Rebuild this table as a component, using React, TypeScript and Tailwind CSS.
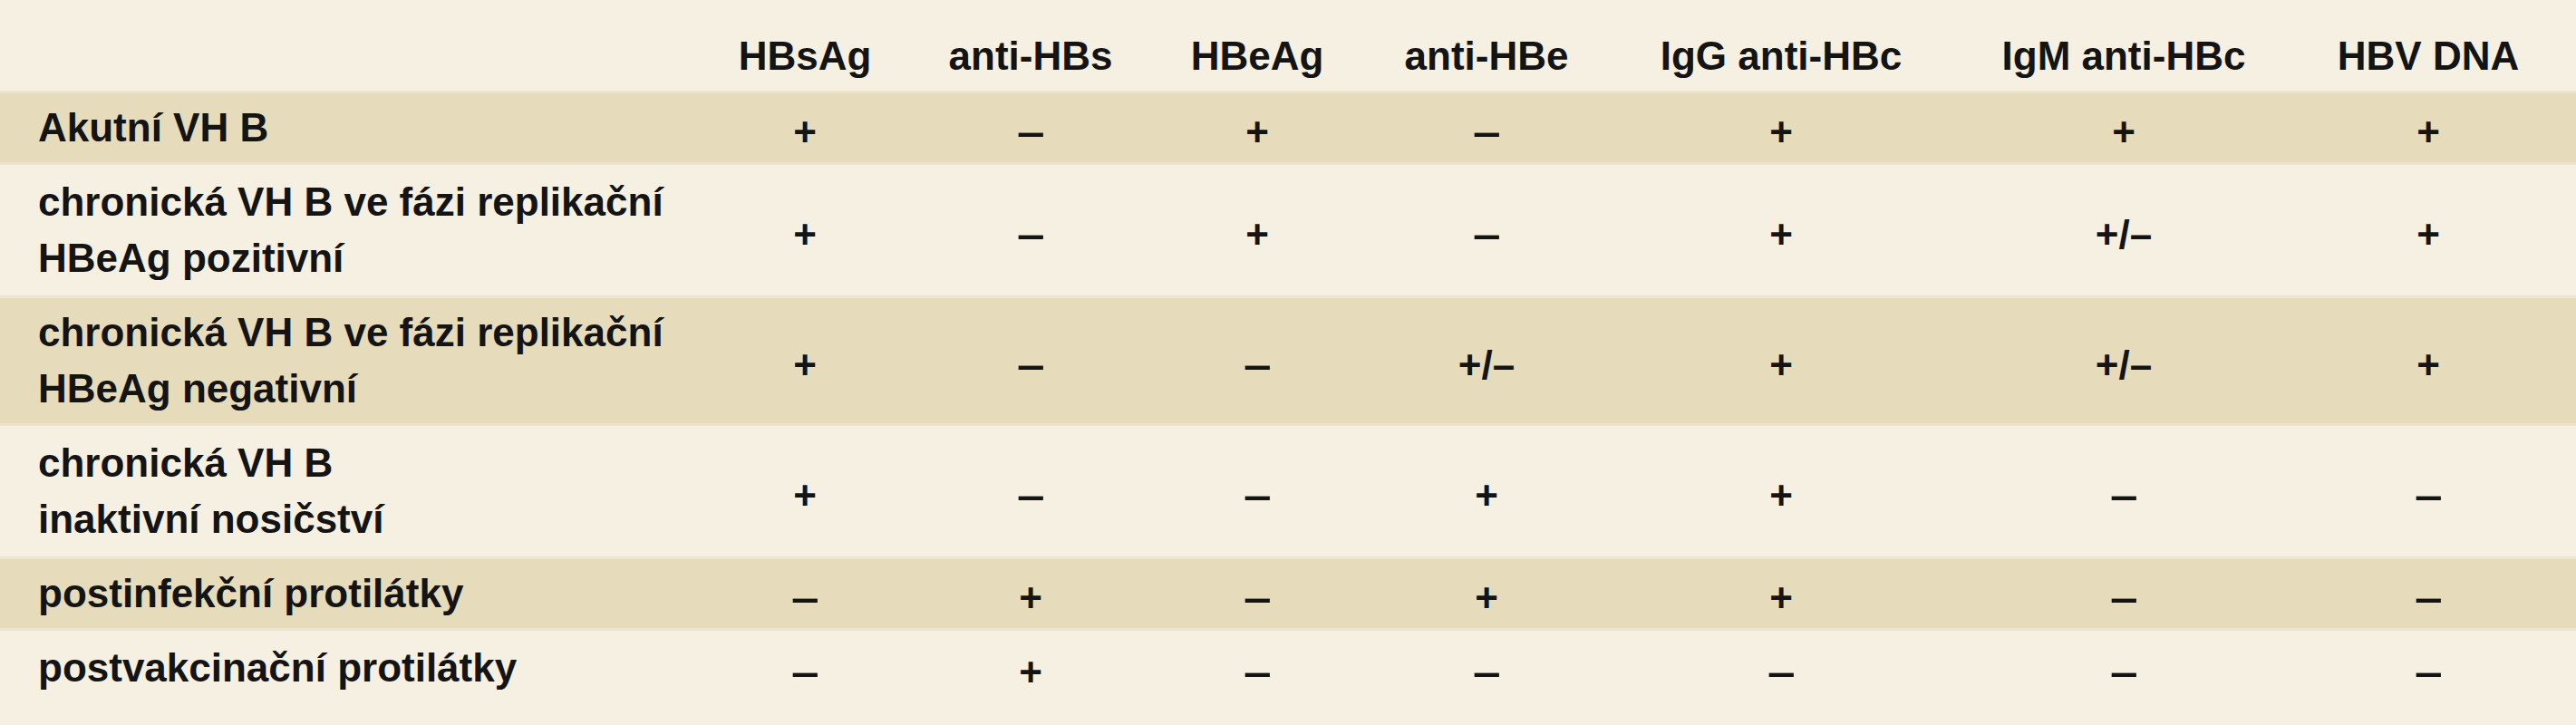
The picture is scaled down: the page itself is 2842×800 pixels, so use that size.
import React from 'react'

type Row = {
  label: string[]
  values: string[]
  shaded?: boolean
}

const columns = ['HBsAg', 'anti-HBs', 'HBeAg', 'anti-HBe', 'IgG anti-HBc', 'IgM anti-HBc', 'HBV DNA']

const rows: Row[] = [
  { label: ['Akutní VH B'], values: ['+', '–', '+', '–', '+', '+', '+'], shaded: true },
  { label: ['chronická VH B ve fázi replikační', 'HBeAg pozitivní'], values: ['+', '–', '+', '–', '+', '+/–', '+'] },
  { label: ['chronická VH B ve fázi replikační', 'HBeAg negativní'], values: ['+', '–', '–', '+/–', '+', '+/–', '+'], shaded: true },
  { label: ['chronická VH B', 'inaktivní nosičství'], values: ['+', '–', '–', '+', '+', '–', '–'] },
  { label: ['postinfekční protilátky'], values: ['–', '+', '–', '+', '+', '–', '–'], shaded: true },
  { label: ['postvakcinační protilátky'], values: ['–', '+', '–', '–', '–', '–', '–'] },
]

// fixed column template so the header and every row line up
const grid = 'grid grid-cols-[764px_248px_250px_250px_256px_394px_362px_310px_1fr]'

function Value({ v }: { v: string }) {
  // the dash in the source is a bit wider than an en dash
  if (v === '–') return <span className="inline-block scale-x-125">–</span>
  return <span>{v}</span>
}

export default function App() {
  return (
    <div className="w-[2842px] h-[800px] bg-[#f5f0e2] text-[#141414] font-['Liberation_Sans',Arial,sans-serif] font-bold text-[44px] leading-[62px] overflow-hidden">
      {/* Header */}
      <div className={`${grid} h-[100px] items-end pb-[7px]`}>
        <div />
        {columns.map((c) => (
          <div key={c} className="text-center whitespace-nowrap">{c}</div>
        ))}
        <div />
      </div>

      {/* Body rows */}
      {rows.map((r, i) => (
        <div
          key={i}
          className={`${grid} ${r.shaded ? 'bg-[#e6dcbb] shadow-[inset_0_3px_0_#ece5cd,inset_0_-3px_0_#ece5cd]' : ''}`}
        >
          <div className="pl-[42px] py-[10px]">
            {r.label.map((l, j) => (
              <div key={j} className="whitespace-nowrap">{l}</div>
            ))}
          </div>
          {r.values.map((v, j) => (
            <div key={j} className="flex items-center justify-center pt-[10px]">
              <Value v={v} />
            </div>
          ))}
          <div />
        </div>
      ))}
    </div>
  )
}
